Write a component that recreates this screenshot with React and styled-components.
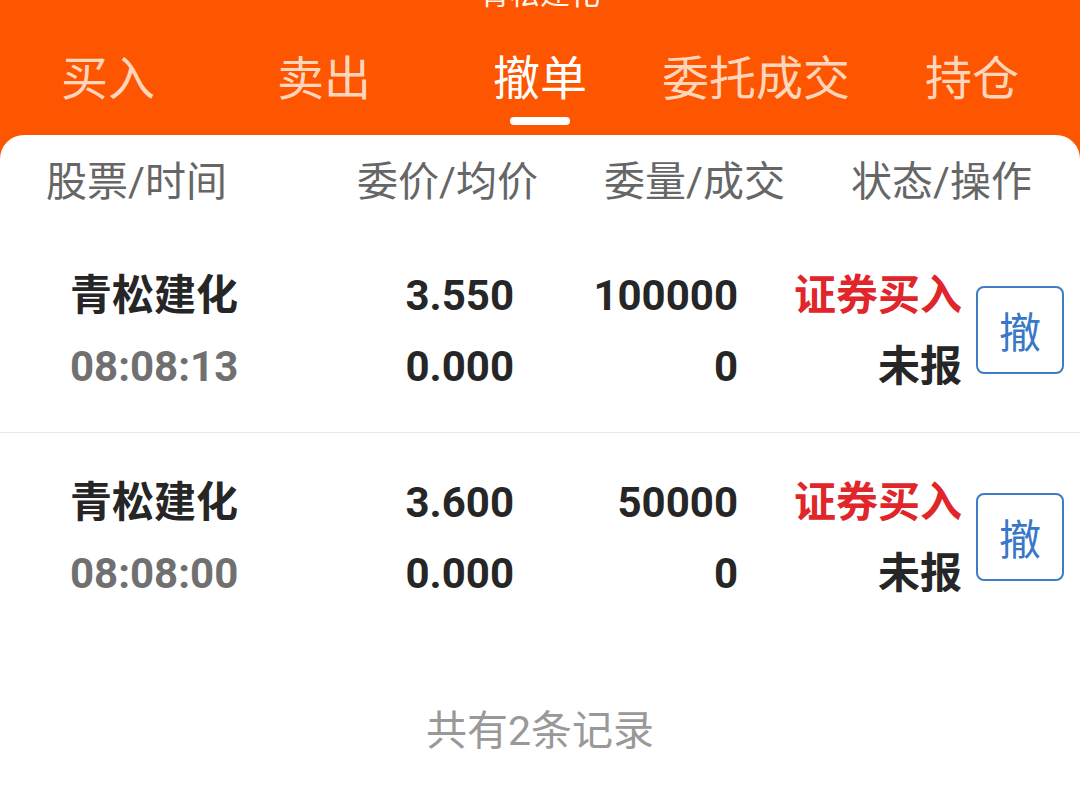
import React from 'react';
import styled, { createGlobalStyle } from 'styled-components';

const GlobalStyle = createGlobalStyle`
    html, body {
        margin: 0;
        padding: 0;
        background: #ffffff;
    }
    body {
        font-family: Roboto, "Noto Sans CJK SC", sans-serif;
        -webkit-font-smoothing: antialiased;
    }
`;

const ORANGE = '#fe5500';

const Page = styled.div`
    width: 1080px;
    height: 795px;
    overflow: hidden;
    display: flex;
    flex-direction: column;
    background: #ffffff;
`;

const Header = styled.header`
    background-color: ${ORANGE};
    display: flex;
    flex-direction: column;
`;

const Title = styled.div`
    margin-top: -24px;
    height: 36px;
    line-height: 36px;
    text-align: center;
    font-size: 30px;
    color: #fff3ea;
`;

const Tabs = styled.nav`
    display: grid;
    grid-template-columns: repeat(5, 1fr);
`;

const Tab = styled.div`
    display: flex;
    flex-direction: column;
    align-items: center;
    padding: 39px 0 10px;
    font-size: 47px;
    line-height: 56px;
    color: ${p => (p.$active ? '#ffffff' : '#ffd6bc')};
`;

const Indicator = styled.span`
    margin-top: 10px;
    width: 60px;
    height: 8px;
    border-radius: 4px;
    background: ${p => (p.$show ? '#ffffff' : 'transparent')};
`;

const Body = styled.div`
    flex: 1;
    background: linear-gradient(to bottom, ${ORANGE} 0, ${ORANGE} 30px, #ffffff 30px);
`;

const Card = styled.section`
    height: 100%;
    background: #ffffff;
    border-radius: 24px 24px 0 0;
    display: flex;
    flex-direction: column;
`;

const HeadRow = styled.div`
    display: grid;
    grid-template-columns: 264px 228px 247px 247px;
    padding: 17px 48px 14px 46px;
    font-size: 41px;
    line-height: 60px;
    color: #666666;
`;

const HeadCell = styled.div`
    text-align: ${p => (p.$left ? 'left' : 'right')};
    white-space: nowrap;
`;

const OrderRow = styled.div`
    display: grid;
    grid-template-columns: 250px 194px 224px 224px 102px;
    row-gap: 11px;
    padding: 40px 16px 35px 70px;
    border-bottom: ${p => (p.$last ? 'none' : '1px solid #e8e8e8')};
    font-size: 42px;
    line-height: 60px;
    font-weight: 700;
`;

const Cell = styled.div`
    text-align: ${p => (p.$left ? 'left' : 'right')};
    color: ${p => p.$color || '#262626'};
    white-space: nowrap;
`;

const CancelButton = styled.button`
    grid-column: 5;
    grid-row: 1 / span 2;
    align-self: center;
    justify-self: end;
    margin-top: -4px;
    width: 88px;
    height: 88px;
    padding: 0;
    background: #ffffff;
    border: 2px solid #3d7dc6;
    border-radius: 8px;
    color: #3878c6;
    font-family: "Noto Sans CJK SC", sans-serif;
    font-size: 42px;
    font-weight: 400;
    line-height: 1;
`;

const Footer = styled.div`
    margin-top: 62px;
    text-align: center;
    font-size: 41px;
    line-height: 60px;
    color: #999999;
`;

const tabs = ['买入', '卖出', '撤单', '委托成交', '持仓'];

const orders = [
    { name: '青松建化', time: '08:08:13', price: '3.550', avg: '0.000', qty: '100000', deal: '0', type: '证券买入', status: '未报' },
    { name: '青松建化', time: '08:08:00', price: '3.600', avg: '0.000', qty: '50000', deal: '0', type: '证券买入', status: '未报' },
];

export default function App() {
    return (
        <Page>
            <GlobalStyle />
            <Header>
                <Title>青松建化</Title>
                <Tabs>
                    {tabs.map(t => (
                        <Tab key={t} $active={t === '撤单'}>
                            {t}
                            <Indicator $show={t === '撤单'} />
                        </Tab>
                    ))}
                </Tabs>
            </Header>
            <Body>
                <Card>
                    <HeadRow>
                        <HeadCell $left>股票/时间</HeadCell>
                        <HeadCell>委价/均价</HeadCell>
                        <HeadCell>委量/成交</HeadCell>
                        <HeadCell>状态/操作</HeadCell>
                    </HeadRow>
                    {orders.map((o, i) => (
                        <OrderRow key={o.time} $last={i === orders.length - 1}>
                            <Cell $left>{o.name}</Cell>
                            <Cell>{o.price}</Cell>
                            <Cell>{o.qty}</Cell>
                            <Cell $color="#e0262b">{o.type}</Cell>
                            <CancelButton type="button">撤</CancelButton>
                            <Cell $left $color="#707070">{o.time}</Cell>
                            <Cell>{o.avg}</Cell>
                            <Cell>{o.deal}</Cell>
                            <Cell>{o.status}</Cell>
                        </OrderRow>
                    ))}
                    <Footer>共有2条记录</Footer>
                </Card>
            </Body>
        </Page>
    );
}
